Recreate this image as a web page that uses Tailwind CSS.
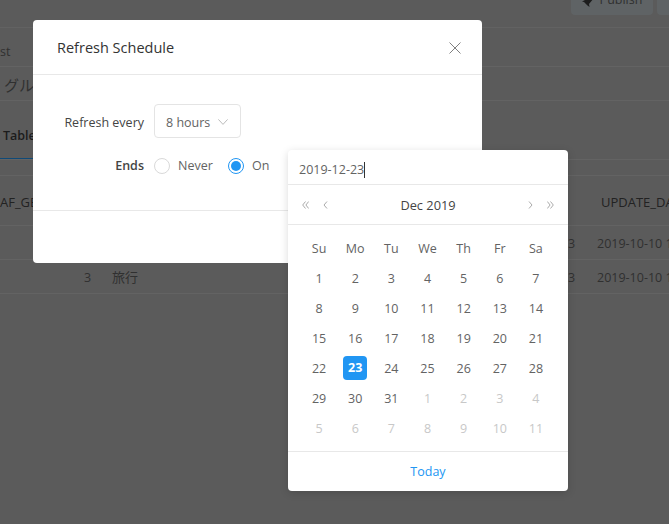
<!doctype html>
<html>
<head>
<meta charset="utf-8">
<script src="https://cdn.jsdelivr.net/npm/@tailwindcss/browser@4"></script>
</head>
<body class="m-0">
<div class="relative w-[669px] h-[524px] overflow-hidden bg-[#5b5b5b] font-['Open_Sans','Noto_Sans_CJK_JP',sans-serif] text-[12.5px] text-[#636363]">

  <!-- dimmed page behind the dialog -->
  <div class="absolute inset-0 text-[#303030]">
    <div class="absolute left-[571px] top-[-14px] w-[82px] h-[29px] bg-[#5f6365] rounded-sm flex items-center justify-center gap-[5px] text-[12.5px]">
      <svg class="w-[13px] h-[13px]" viewBox="0 0 13 13"><path d="M3 6 L9 1 L12.5 0.5 L12 4 L7 10 L7.5 13 L5.5 11.5 L2 8 L0 7.5 Z" fill="#1d1d1d"/></svg>
      <span>Publish</span>
    </div>
    <div class="absolute left-[657px] top-[-14px] w-[20px] h-[29px] bg-[#5f6365] rounded-sm"></div>
    <div class="absolute left-0 right-0 top-[27px] h-px bg-[#626262]"></div>
    <div class="absolute left-0 top-[43px]">st</div>
    <div class="absolute left-0 right-0 top-[66px] h-px bg-[#636363]"></div>
    <div class="absolute left-[4px] top-[74px] text-[15px]">グルメ</div>
    <div class="absolute left-0 right-0 top-[100px] h-px bg-[#636363]"></div>
    <div class="absolute left-[3px] top-[127px] font-semibold text-[#1c1c1c]">Table</div>
    <div class="absolute left-0 top-[158px] w-[33px] h-[2px] bg-[#0f4a78]"></div>
    <div class="absolute left-0 right-0 top-[159px] h-px bg-[#636363]"></div>
    <div class="absolute left-0 right-0 top-[175px] h-px bg-[#636363]"></div>
    <div class="absolute left-0 top-[193px] text-[13px] text-[#222]">AF_GE</div>
    <div class="absolute left-[601px] top-[193px] text-[13px] whitespace-nowrap text-[#222]">UPDATE_DATE</div>
    <div class="absolute left-0 right-0 top-[225px] h-px bg-[#636363]"></div>
    <div class="absolute left-[568px] top-[235px] whitespace-nowrap">3</div>
    <div class="absolute left-[597px] top-[235px] whitespace-nowrap">2019-10-10 1</div>
    <div class="absolute left-0 right-0 top-[259px] h-px bg-[#636363]"></div>
    <div class="absolute left-[84px] top-[269px]">3</div>
    <div class="absolute left-[112px] top-[268px] text-[13px]">旅行</div>
    <div class="absolute left-[568px] top-[269px] whitespace-nowrap">3</div>
    <div class="absolute left-[597px] top-[269px] whitespace-nowrap">2019-10-10 1</div>
    <div class="absolute left-0 right-0 top-[293px] h-px bg-[#636363]"></div>
  </div>

  <!-- dialog -->
  <div class="absolute left-[33px] top-[20px] w-[449px] h-[243px] bg-white rounded-sm flex flex-col">
    <div class="h-[55px] shrink-0 border-b border-[#e8e8e8] pl-[24px] pr-[21px] pt-px flex items-center justify-between">
      <span class="text-[14.5px] text-[#333]">Refresh Schedule</span>
      <svg class="w-[12px] h-[12px]" viewBox="0 0 12 12" fill="none" stroke="#808080" stroke-width="1"><path d="M0.5 0.5 L11.5 11.5 M11.5 0.5 L0.5 11.5"/></svg>
    </div>
    <div class="h-[136px] shrink-0 border-b border-[#e8e8e8] pt-[29px] flex flex-col gap-[18px]">
      <div class="flex items-center h-[34px]">
        <span class="w-[111px] text-right font-medium text-[#444] pt-[4px]">Refresh every</span>
        <div class="ml-[10px] w-[87px] h-[34px] border border-[#e4e4e4] rounded-sm flex items-center pl-[11px] gap-[9px]">
          <span class="pt-[4px] w-[43px] whitespace-nowrap">8 hours</span>
          <svg class="w-[10px] h-[6px] mt-[1px]" viewBox="0 0 10 6" fill="none" stroke="#bbb" stroke-width="1"><path d="M0.4 0.4 L5 5.4 L9.6 0.4"/></svg>
        </div>
      </div>
      <div class="flex items-center h-[20px]">
        <span class="w-[111px] text-right font-semibold text-[#444]">Ends</span>
        <span class="ml-[10px] w-4 h-4 rounded-full border border-[#d9d9d9]"></span>
        <span class="ml-2 w-[34px]">Never</span>
        <span class="ml-[16px] w-4 h-4 rounded-full border border-[#2196f3] flex items-center justify-center"><span class="w-[10px] h-[10px] rounded-full bg-[#2196f3]"></span></span>
        <span class="ml-2">On</span>
      </div>
    </div>
  </div>

  <!-- date popup -->
  <div class="absolute left-[288px] top-[150px] w-[280px] h-[341px] bg-white rounded-sm shadow-[0_2px_8px_rgba(0,0,0,0.15)] flex flex-col">
    <div class="h-[35px] shrink-0 border-b border-[#e8e8e8] flex items-center pl-[11px] pt-[6px]">
      <span>2019-12-23</span><span class="w-px h-[16px] bg-[#333]"></span>
    </div>
    <div class="h-[40px] shrink-0 border-b border-[#e8e8e8] flex items-center justify-between px-[14px]">
      <div class="flex items-center gap-[14px]">
        <svg class="w-[7px] h-[8px]" viewBox="0 0 7 8" fill="none" stroke="#aaa" stroke-width="1"><path d="M3.5 0.5 L0.7 4 L3.5 7.5 M6.7 0.5 L3.9 4 L6.7 7.5"/></svg>
        <svg class="w-[5px] h-[8px]" viewBox="0 0 5 8" fill="none" stroke="#aaa" stroke-width="1"><path d="M4 0.5 L1 4 L4 7.5"/></svg>
      </div>
      <span class="font-medium text-[12.8px] text-[#444] pt-[2px]">Dec 2019</span>
      <div class="flex items-center gap-[14px]">
        <svg class="w-[5px] h-[8px]" viewBox="0 0 5 8" fill="none" stroke="#aaa" stroke-width="1"><path d="M1 0.5 L4 4 L1 7.5"/></svg>
        <svg class="w-[7px] h-[8px]" viewBox="0 0 7 8" fill="none" stroke="#aaa" stroke-width="1"><path d="M0.3 0.5 L3.1 4 L0.3 7.5 M3.5 0.5 L6.3 4 L3.5 7.5"/></svg>
      </div>
    </div>
    <div class="pt-[9px] pl-[13px] pr-[14px] h-[226px] shrink-0 grid grid-cols-7 auto-rows-[30px] items-center justify-items-center">
      <span>Su</span><span>Mo</span><span>Tu</span><span>We</span><span>Th</span><span>Fr</span><span>Sa</span>
      <span>1</span><span>2</span><span>3</span><span>4</span><span>5</span><span>6</span><span>7</span>
      <span>8</span><span>9</span><span>10</span><span>11</span><span>12</span><span>13</span><span>14</span>
      <span>15</span><span>16</span><span>17</span><span>18</span><span>19</span><span>20</span><span>21</span>
      <span>22</span><span class="w-6 h-6 -mt-[2px] rounded-sm bg-[#2196f3] text-white font-bold flex items-center justify-center">23</span><span>24</span><span>25</span><span>26</span><span>27</span><span>28</span>
      <span>29</span><span>30</span><span>31</span><span class="text-[#c8c8c8]">1</span><span class="text-[#c8c8c8]">2</span><span class="text-[#c8c8c8]">3</span><span class="text-[#c8c8c8]">4</span>
      <span class="text-[#c8c8c8]">5</span><span class="text-[#c8c8c8]">6</span><span class="text-[#c8c8c8]">7</span><span class="text-[#c8c8c8]">8</span><span class="text-[#c8c8c8]">9</span><span class="text-[#c8c8c8]">10</span><span class="text-[#c8c8c8]">11</span>
    </div>
    <div class="flex-1 border-t border-[#e8e8e8] pt-[2px] flex items-center justify-center text-[#2196f3]">Today</div>
  </div>
</div>
</body>
</html>
